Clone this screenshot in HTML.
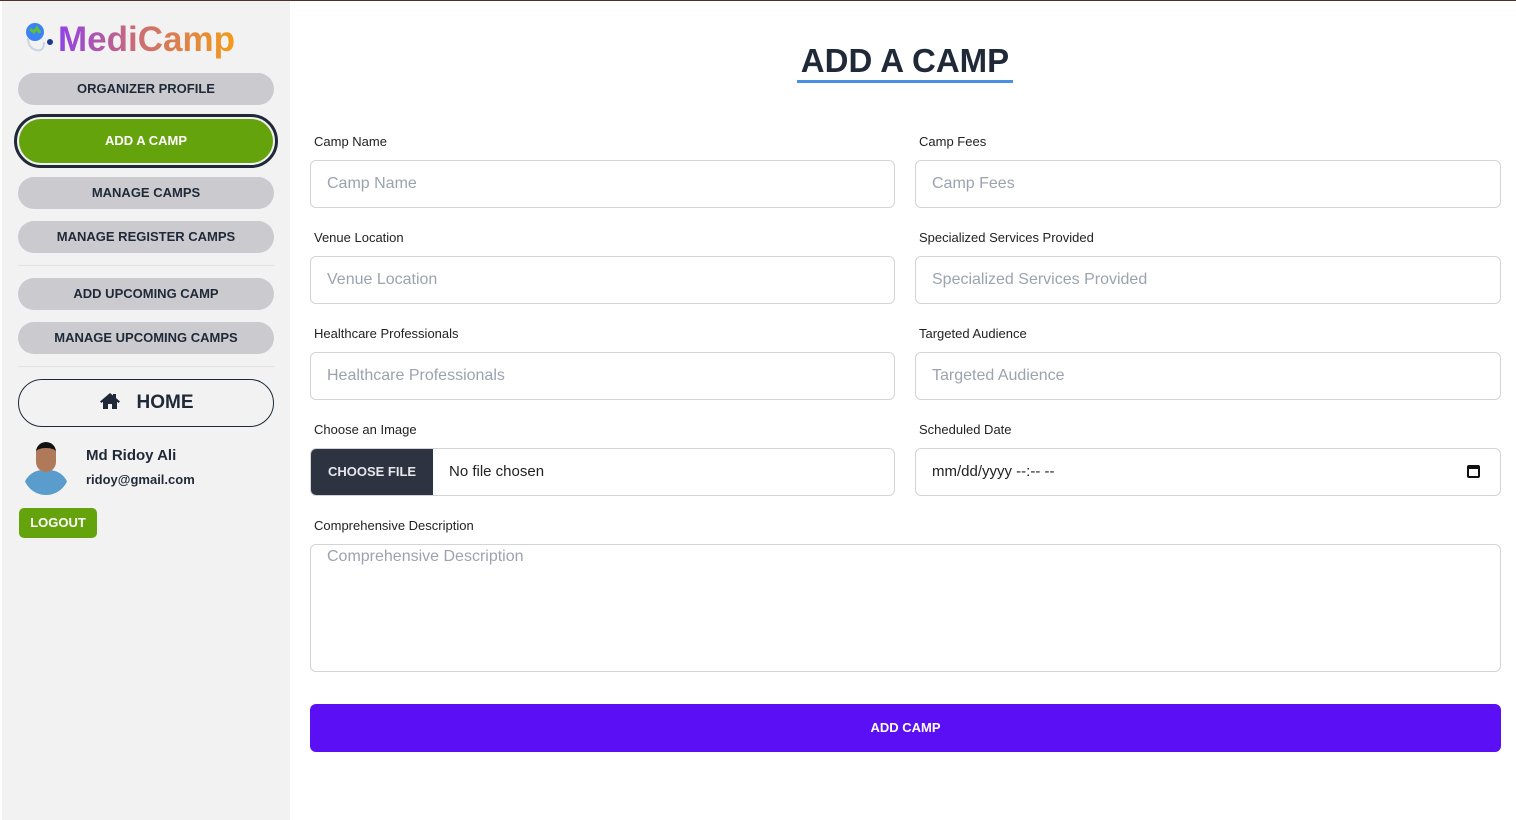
<!DOCTYPE html>
<html><head><style>
*{box-sizing:border-box;margin:0;padding:0}
body{width:1516px;height:820px;background:#fff;font-family:"Liberation Sans",sans-serif;position:relative;overflow:hidden}
.side{position:absolute;left:2px;top:1px;width:288px;height:819px;background:#f2f2f2}
.logo{position:absolute;left:22px;top:20px;font-weight:bold;font-size:35px;background:linear-gradient(90deg,#8b3ff0 30px,#c86a7a 110px,#f39a1a 210px);-webkit-background-clip:text;color:transparent;padding-left:36px;line-height:40px}
.btn{position:absolute;left:18px;width:256px;height:32px;border-radius:16px;background:#cbcbcf;color:#1f2937;font-weight:bold;font-size:13px;text-align:center;line-height:32px}
.sep{position:absolute;left:18px;width:256px;height:1px;background:#e2e2e2}
.main label{position:absolute;font-size:13px;color:#222}
.inp{position:absolute;height:48px;border:1px solid #d4d4d4;border-radius:6px;font-size:16px;color:#9ca3af;padding-left:16px;line-height:46px;background:#fff}
</style></head><body>
<div style="position:absolute;left:0;top:0;width:1516px;height:1px;background:#4a3328"></div>
<div class="side"></div>
<svg style="position:absolute;left:22px;top:20px" width="36" height="40"><circle cx="13" cy="12" r="9" fill="#3b82f6"/><path d="M8 9l4 3 3-4 3 5" stroke="#5fbf3a" stroke-width="3" fill="none"/><path d="M6 18q0 10 8 12q8 2 8-8" stroke="#cbd5e1" stroke-width="2" fill="none"/><circle cx="28" cy="22" r="3" fill="#1e3a8a"/></svg>
<div class="logo">MediCamp</div>
<div class="btn" style="top:73px">ORGANIZER PROFILE</div>
<div style="position:absolute;left:14px;top:114px;width:264px;height:54px;border:3px solid #1f2937;border-radius:27px;padding:2px"><div style="background:#65a30d;height:44px;border-radius:22px;color:#fff;font-weight:bold;font-size:13px;text-align:center;line-height:44px">ADD A CAMP</div></div>
<div class="btn" style="top:177px">MANAGE CAMPS</div>
<div class="btn" style="top:221px">MANAGE REGISTER CAMPS</div>
<div class="sep" style="top:265px"></div>
<div class="btn" style="top:278px">ADD UPCOMING CAMP</div>
<div class="btn" style="top:322px">MANAGE UPCOMING CAMPS</div>
<div class="sep" style="top:366px"></div>
<div style="position:absolute;left:18px;top:379px;width:256px;height:48px;border:1.5px solid #1f2937;border-radius:24px;text-align:center;line-height:46px;font-weight:bold;font-size:19px;color:#1f2937"><svg width="22" height="18" viewBox="0 0 22 18" style="vertical-align:-2px;margin-right:16px"><path d="M11 1L1 9.5l1.5 1.5L4 9.8V17h5v-5h4v5h5V9.8l1.5 1.2L21 9.5 17 6V2h-3v1.5z" fill="#1f2937"/></svg>HOME</div>
<div style="position:absolute;left:23px;top:440px;width:46px;height:55px;border-radius:0 0 23px 23px;overflow:hidden"><div style="position:absolute;left:0;top:30px;width:46px;height:30px;background:#5a9ccb;border-radius:20px 20px 0 0"></div><div style="position:absolute;left:13px;top:2px;width:20px;height:30px;background:#b07a5a;border-radius:10px;border-top:6px solid #111"></div></div>
<div style="position:absolute;left:86px;top:447px;font-weight:bold;font-size:15px;color:#1f2937">Md Ridoy Ali</div>
<div style="position:absolute;left:86px;top:472px;font-weight:bold;font-size:13px;color:#1f2937">ridoy@gmail.com</div>
<div style="position:absolute;left:19px;top:508px;width:78px;height:30px;background:#65a30d;border-radius:5px;color:#fff;font-weight:bold;font-size:13px;text-align:center;line-height:30px">LOGOUT</div>
<div class="main">
<div style="position:absolute;left:797px;top:42px;width:216px;font-weight:bold;font-size:33px;color:#1f2937;border-bottom:3px solid #4a90e2;line-height:38px;text-align:center">ADD A CAMP</div>
<label style="left:314px;top:134px">Camp Name</label><div class="inp" style="left:310px;top:160px;width:585px">Camp Name</div>
<label style="left:919px;top:134px">Camp Fees</label><div class="inp" style="left:915px;top:160px;width:586px">Camp Fees</div>
<label style="left:314px;top:230px">Venue Location</label><div class="inp" style="left:310px;top:256px;width:585px">Venue Location</div>
<label style="left:919px;top:230px">Specialized Services Provided</label><div class="inp" style="left:915px;top:256px;width:586px">Specialized Services Provided</div>
<label style="left:314px;top:326px">Healthcare Professionals</label><div class="inp" style="left:310px;top:352px;width:585px">Healthcare Professionals</div>
<label style="left:919px;top:326px">Targeted Audience</label><div class="inp" style="left:915px;top:352px;width:586px">Targeted Audience</div>
<label style="left:314px;top:422px">Choose an Image</label>
<div class="inp" style="left:310px;top:448px;width:585px;padding:0;color:#222;overflow:hidden"><span style="display:inline-block;width:122px;height:46px;background:#2d3341;color:#e5e7eb;font-weight:bold;font-size:13px;text-align:center">CHOOSE FILE</span><span style="margin-left:16px;font-size:15px">No file chosen</span></div>
<label style="left:919px;top:422px">Scheduled Date</label>
<div class="inp" style="left:915px;top:448px;width:586px;color:#222;font-size:15px">mm/dd/yyyy --:-- --<span style="position:absolute;right:20px;top:16px;width:13px;height:13px;border:2px solid #111;border-top-width:4px;border-radius:2px"></span></div>
<label style="left:314px;top:518px">Comprehensive Description</label>
<div class="inp" style="left:310px;top:544px;width:1191px;height:128px;line-height:24px;padding-top:0">Comprehensive Description</div>
<div style="position:absolute;left:310px;top:704px;width:1191px;height:48px;background:#5b0ff5;border-radius:6px;color:#fff;font-weight:bold;font-size:13px;text-align:center;line-height:48px">ADD CAMP</div>
</div>
</body></html>
